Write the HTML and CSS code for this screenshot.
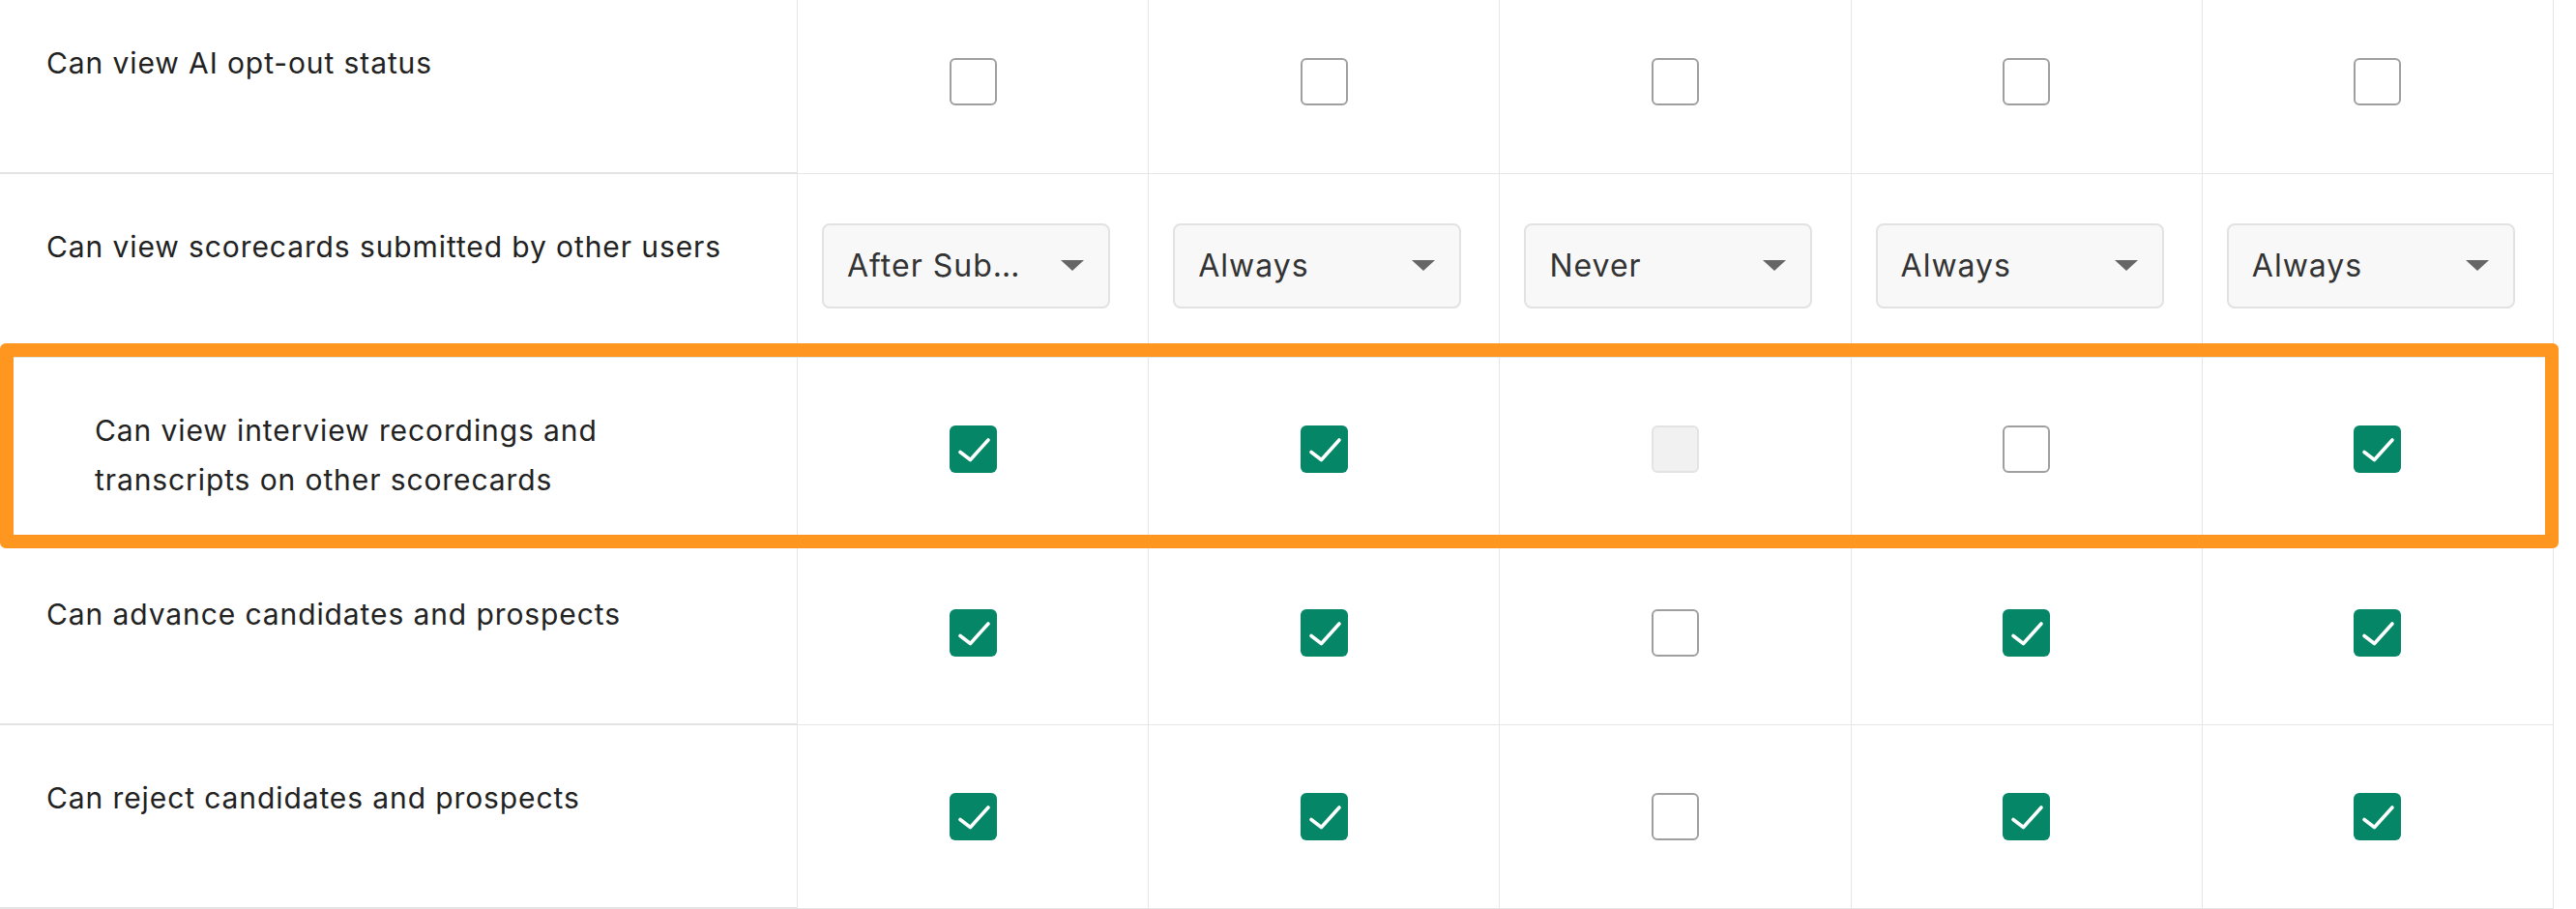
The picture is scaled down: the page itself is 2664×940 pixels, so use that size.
FILE: index.html
```html
<!DOCTYPE html>
<html lang="en">
<head>
	<meta charset="UTF-8" />
	<meta name="viewport" content="width=device-width, initial-scale=1.0" />
	<title>Permissions</title>
	<link rel="stylesheet" href="styles.css">
</head>
<body>
	<div class="perm-table">
		<!-- Can view AI opt-out status -->
		<div class="perm-row">
			<div class="label"><span>Can view AI opt-out status</span></div>
			<div class="cell"><span class="box"></span></div>
			<div class="cell"><span class="box"></span></div>
			<div class="cell"><span class="box"></span></div>
			<div class="cell"><span class="box"></span></div>
			<div class="cell"><span class="box"></span></div>
		</div>

		<!-- scorecards -->
		<div class="perm-row">
			<div class="label"><span>Can view scorecards submitted by other users</span></div>
			<div class="cell cell-select"><div class="select"><span>After Sub…</span><i class="caret"></i></div></div>
			<div class="cell cell-select"><div class="select"><span>Always</span><i class="caret"></i></div></div>
			<div class="cell cell-select"><div class="select"><span>Never</span><i class="caret"></i></div></div>
			<div class="cell cell-select"><div class="select"><span>Always</span><i class="caret"></i></div></div>
			<div class="cell cell-select"><div class="select"><span>Always</span><i class="caret"></i></div></div>
		</div>

		<!-- highlighted row -->
		<div class="perm-row is-highlight">
			<div class="label"><span>Can view interview recordings and transcripts on other scorecards</span></div>
			<div class="cell"><span class="box checked"><svg viewBox="0 0 49 49"><polyline points="11,27.5 21.5,35.5 40,15" /></svg></span></div>
			<div class="cell"><span class="box checked"><svg viewBox="0 0 49 49"><polyline points="11,27.5 21.5,35.5 40,15" /></svg></span></div>
			<div class="cell"><span class="box disabled"></span></div>
			<div class="cell"><span class="box"></span></div>
			<div class="cell"><span class="box checked"><svg viewBox="0 0 49 49"><polyline points="11,27.5 21.5,35.5 40,15" /></svg></span></div>
			<div class="highlight"></div>
		</div>

		<!-- advance -->
		<div class="perm-row">
			<div class="label"><span>Can advance candidates and prospects</span></div>
			<div class="cell"><span class="box checked"><svg viewBox="0 0 49 49"><polyline points="11,27.5 21.5,35.5 40,15" /></svg></span></div>
			<div class="cell"><span class="box checked"><svg viewBox="0 0 49 49"><polyline points="11,27.5 21.5,35.5 40,15" /></svg></span></div>
			<div class="cell"><span class="box"></span></div>
			<div class="cell"><span class="box checked"><svg viewBox="0 0 49 49"><polyline points="11,27.5 21.5,35.5 40,15" /></svg></span></div>
			<div class="cell"><span class="box checked"><svg viewBox="0 0 49 49"><polyline points="11,27.5 21.5,35.5 40,15" /></svg></span></div>
		</div>

		<!-- reject -->
		<div class="perm-row">
			<div class="label"><span>Can reject candidates and prospects</span></div>
			<div class="cell"><span class="box checked"><svg viewBox="0 0 49 49"><polyline points="11,27.5 21.5,35.5 40,15" /></svg></span></div>
			<div class="cell"><span class="box checked"><svg viewBox="0 0 49 49"><polyline points="11,27.5 21.5,35.5 40,15" /></svg></span></div>
			<div class="cell"><span class="box"></span></div>
			<div class="cell"><span class="box checked"><svg viewBox="0 0 49 49"><polyline points="11,27.5 21.5,35.5 40,15" /></svg></span></div>
			<div class="cell"><span class="box checked"><svg viewBox="0 0 49 49"><polyline points="11,27.5 21.5,35.5 40,15" /></svg></span></div>
		</div>
	</div>
</body>
</html>
```

FILE: styles.css
```css
* {
	padding: 0;
	margin: 0;
	box-sizing: border-box;
}

body {
	background-color: #fff;
	font-family: "Inter", "Liberation Sans", sans-serif;
	color: #222;
	overflow: hidden;
}

/* 表格 start */
.perm-table {
	width: 2641px;
	/* 第一行被截掉一点 */
	margin-top: -10px;
}

.perm-row {
	display: grid;
	grid-template-columns: 825px repeat(5, 1fr);
	height: 190px;
}

.perm-row .label {
	padding: 50px 40px 0 48px;
	font-size: 30px;
	line-height: 51px;
	letter-spacing: 0.9px;
	border-right: 1px solid #e6e6e6;
	border-bottom: 2px solid #e3e3e3;
}

.perm-row .cell {
	display: flex;
	justify-content: center;
	align-items: center;
	border-right: 1px solid #e6e6e6;
	border-bottom: 1px solid #e6e6e6;
}

.perm-row .cell-select {
	justify-content: flex-start;
	padding-left: 25px;
}

/* 高亮行 */
.perm-row.is-highlight {
	position: relative;
}

.perm-row.is-highlight .label {
	padding-left: 98px;
}

.perm-row.is-highlight .label span {
	display: block;
	max-width: 600px;
}

.highlight {
	position: absolute;
	top: -15px;
	left: 0;
	right: -5px;
	bottom: -7px;
	z-index: 1;
	border: 14px solid #ff961f;
	border-radius: 6px;
	pointer-events: none;
}

/* 复选框 */
.box {
	display: block;
	width: 49px;
	height: 49px;
	border: 2px solid #9f9f9f;
	border-radius: 6px;
	background-color: #fff;
}

.box.checked {
	border: 0;
	background-color: #058667;
}

.box.disabled {
	border-color: #e3e3e3;
	background-color: #f1f1f1;
}

.box svg {
	display: block;
	width: 49px;
	height: 49px;
}

.box svg polyline {
	fill: none;
	stroke: #fff;
	stroke-width: 3.6;
	stroke-linecap: round;
	stroke-linejoin: round;
}

/* 下拉框 */
.select {
	display: flex;
	justify-content: space-between;
	align-items: center;
	width: 298px;
	height: 88px;
	padding: 0 25px 0 24px;
	border: 2px solid #e2e2e2;
	border-radius: 8px;
	background-color: #f8f8f8;
	font-size: 32px;
	letter-spacing: 1px;
	color: #333;
}

.select .caret {
	width: 0;
	height: 0;
	border-left: 12px solid transparent;
	border-right: 12px solid transparent;
	border-top: 11px solid #666;
}

/* 表格 end */
```
